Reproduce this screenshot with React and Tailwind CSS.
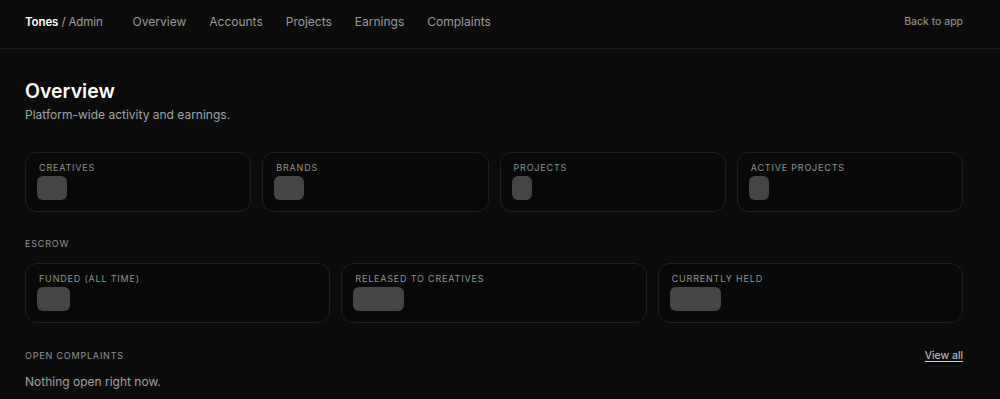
import React from "react";

const stats = [
  { label: "Creatives", w: "w-[30px]" },
  { label: "Brands", w: "w-[30px]" },
  { label: "Projects", w: "w-[20px]" },
  { label: "Active projects", w: "w-[20px]" },
];

const escrow = [
  { label: "Funded (all time)", w: "w-[33px]" },
  { label: "Released to creatives", w: "w-[51px]" },
  { label: "Currently held", w: "w-[51px]" },
];

const navItems = ["Overview", "Accounts", "Projects", "Earnings", "Complaints"];

const StatCard = ({ label, w }) => (
  <div className="h-[60px] rounded-xl border border-[#1f1f1f] bg-[#080808] pl-[13px] pt-[8px]">
    <p className="text-[9px] leading-[14px] uppercase tracking-[0.09em] text-[#939393]">
      {label}
    </p>
    <div className={`mt-[1px] h-[24px] rounded-md bg-[#464646] -ml-[2px] ${w}`} />
  </div>
);

const App = () => {
  return (
    <div className="min-h-screen bg-[#0b0b0b] font-['Inter',sans-serif] text-white">
      {/* Header */}
      <header className="flex h-[49px] items-center border-b border-[#1c1c1c] pl-[25px] pr-[37px] pb-[4px]">
        <div className="text-[11.5px] leading-[16px] tracking-[-0.01em]">
          <span className="font-semibold text-white">Tones</span>
          <span className="text-[#a3a3a3]"> / Admin</span>
        </div>
        <nav className="ml-[30px] flex gap-[23px] text-[12px] leading-[16px] text-[#9c9c9c]">
          {navItems.map((item) => (
            <span key={item}>{item}</span>
          ))}
        </nav>
        <span className="ml-auto text-[10.5px] text-[#9c9c9c]">Back to app</span>
      </header>

      <main className="pl-[25px] pr-[37px] pt-[29px]">
        <h1 className="text-[19.5px] leading-[26px] font-semibold">Overview</h1>
        <p className="mt-[2px] text-[12px] leading-[18px] text-[#a3a3a3]">
          Platform-wide activity and earnings.
        </p>

        <div className="mt-[28px] grid grid-cols-4 gap-[11px]">
          {stats.map((s) => (
            <StatCard key={s.label} {...s} />
          ))}
        </div>

        <h2 className="mt-[25px] text-[9px] leading-[14px] uppercase tracking-[0.09em] text-[#939393]">
          Escrow
        </h2>
        <div className="mt-[12px] grid grid-cols-3 gap-[11px]">
          {escrow.map((s) => (
            <StatCard key={s.label} {...s} />
          ))}
        </div>

        <div className="mt-[26px] flex items-center justify-between leading-[14px]">
          <h2 className="text-[9px] uppercase tracking-[0.09em] text-[#939393]">
            Open complaints
          </h2>
          <span className="text-[10.5px] text-[#cfcfcf] underline underline-offset-2">
            View all
          </span>
        </div>
        <p className="mt-[10px] text-[12px] leading-[18px] text-[#a3a3a3]">
          Nothing open right now.
        </p>
      </main>
    </div>
  );
};

export default App;
